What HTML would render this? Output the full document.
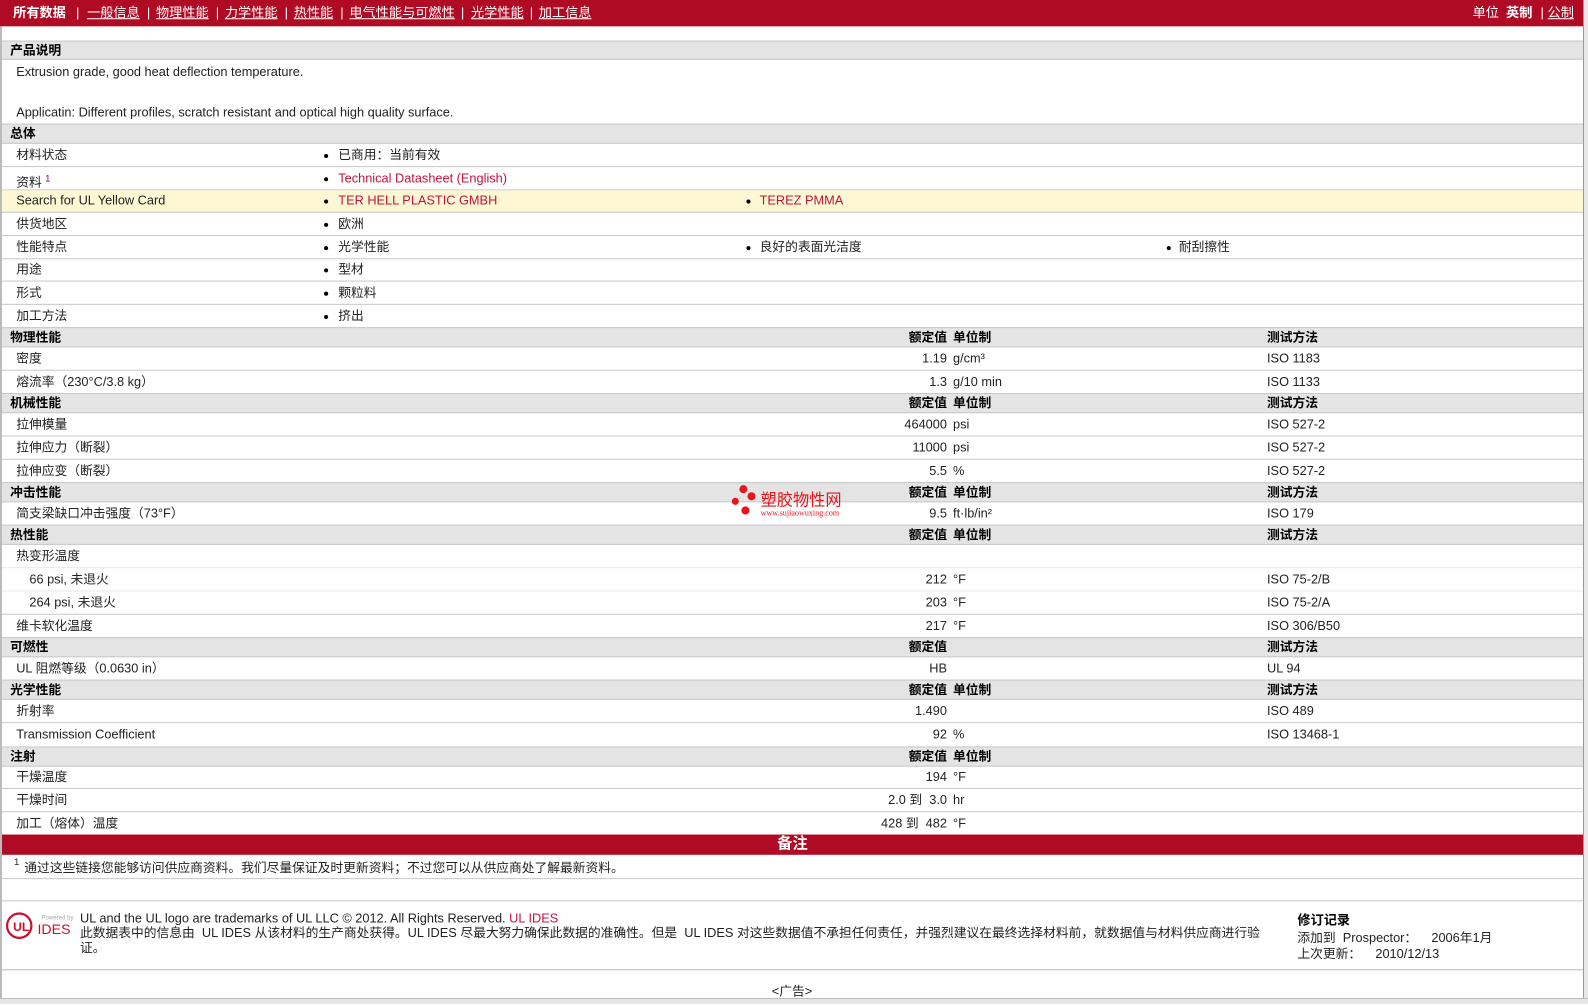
<!DOCTYPE html>
<html><head><meta charset="utf-8">
<style>
*{margin:0;padding:0;box-sizing:border-box}
body{width:1588px;height:1004px;position:relative;background:#fff;font-family:"Liberation Sans","Noto Sans CJK SC",sans-serif;font-size:12.6px;color:#222;overflow:hidden}
#w{position:absolute;left:0;top:0;width:1568px;height:992px;transform:scale(1.0128);transform-origin:0 0}
.a{position:absolute;white-space:nowrap}
.r{position:absolute;left:2px;width:1561px;border-bottom:1px solid #c8c8c8}
.g{background:#e4e4e4;font-weight:bold;color:#000;border-top:1px solid #c8c8c8;border-bottom:1px solid #c8c8c8}
.lk{color:#c0143c}
.bu{position:absolute;width:4px;height:4px;border-radius:50%;background:#000}
.v{position:absolute;right:628px;text-align:right}
.u{position:absolute;left:939px}
.t{position:absolute;left:1249px}
.l{position:absolute;left:14px}
.b1{left:318px}.b2{left:735px}.b3{left:1150px}
.x1{position:absolute;left:332px}.x2{position:absolute;left:748px}.x3{position:absolute;left:1162px}
</style></head><body>
<div id="w">
<div class="a" style="left:0;top:0;width:1565px;height:26px;background:#b00b24;color:#fff;font-size:13px;line-height:26px">
<span class="a" style="left:13px;font-weight:bold">所有数据</span>
<span class="a" style="left:75px">|</span>
<span class="a" style="left:86px;text-decoration:underline">一般信息</span>
<span class="a" style="left:145px">|</span>
<span class="a" style="left:154px;text-decoration:underline">物理性能</span>
<span class="a" style="left:213px">|</span>
<span class="a" style="left:222px;text-decoration:underline">力学性能</span>
<span class="a" style="left:281px">|</span>
<span class="a" style="left:290px;text-decoration:underline">热性能</span>
<span class="a" style="left:336px">|</span>
<span class="a" style="left:345px;text-decoration:underline">电气性能与可燃性</span>
<span class="a" style="left:455px">|</span>
<span class="a" style="left:465px;text-decoration:underline">光学性能</span>
<span class="a" style="left:523px">|</span>
<span class="a" style="left:532px;text-decoration:underline">加工信息</span>
<span class="a" style="left:1454px">单位</span>
<span class="a" style="left:1487px;font-weight:bold">英制</span>
<span class="a" style="left:1521px">|</span>
<span class="a" style="left:1528px;text-decoration:underline">公制</span>
</div>
<div class="a" style="left:0;top:26px;width:2px;height:960px;background:#bbb"></div>
<div class="a" style="left:1563px;top:26px;width:1px;height:960px;background:#bbb"></div>

<div class="r g" style="top:40px;height:19px;line-height:18px"><span class="a" style="left:8px">产品说明</span></div>
<div class="a" style="left:16px;top:64px;line-height:15px">Extrusion grade, good heat deflection temperature.</div>
<div class="a" style="left:16px;top:104px;line-height:15px">Applicatin: Different profiles, scratch resistant and optical high quality surface.</div>

<div class="r g" style="top:122px;height:20px;line-height:18px"><span class="a" style="left:8px">总体</span></div>
<div class="r" style="top:142px;height:23px;line-height:22px"><span class="l">材料状态</span><span class="bu b1" style="top:10px"></span><span class="x1">已商用：当前有效</span></div>
<div class="r" style="top:165px;height:23px;line-height:22px"><span class="l">资料 <sup style="font-size:9px;color:#606">1</sup></span><span class="bu b1" style="top:10px"></span><span class="x1 lk">Technical Datasheet (English)</span></div>
<div class="r" style="top:188px;height:22px;line-height:21px;background:#fdf8d3"><span class="l">Search for UL Yellow Card</span><span class="bu b1" style="top:9px"></span><span class="x1 lk">TER HELL PLASTIC GMBH</span><span class="bu b2" style="top:9px"></span><span class="x2 lk">TEREZ PMMA</span></div>
<div class="r" style="top:210px;height:23px;line-height:22px"><span class="l">供货地区</span><span class="bu b1" style="top:10px"></span><span class="x1">欧洲</span></div>
<div class="r" style="top:233px;height:23px;line-height:22px"><span class="l">性能特点</span><span class="bu b1" style="top:10px"></span><span class="x1">光学性能</span><span class="bu b2" style="top:10px"></span><span class="x2">良好的表面光洁度</span><span class="bu b3" style="top:10px"></span><span class="x3">耐刮擦性</span></div>
<div class="r" style="top:256px;height:22px;line-height:21px"><span class="l">用途</span><span class="bu b1" style="top:9px"></span><span class="x1">型材</span></div>
<div class="r" style="top:278px;height:23px;line-height:22px"><span class="l">形式</span><span class="bu b1" style="top:10px"></span><span class="x1">颗粒料</span></div>
<div class="r" style="top:301px;height:23px;line-height:22px;border-bottom:none"><span class="l">加工方法</span><span class="bu b1" style="top:10px"></span><span class="x1">挤出</span></div>

<div class="r g" style="top:323px;height:20px;line-height:18px"><span class="a" style="left:8px">物理性能</span><span class="v">额定值</span><span class="u">单位制</span><span class="t">测试方法</span></div>
<div class="r" style="top:343px;height:23px;line-height:22px"><span class="l">密度</span><span class="v">1.19</span><span class="u">g/cm³</span><span class="t">ISO 1183</span></div>
<div class="r" style="top:366px;height:22px;line-height:22px;border-bottom:none"><span class="l">熔流率（230°C/3.8 kg）</span><span class="v">1.3</span><span class="u">g/10 min</span><span class="t">ISO 1133</span></div>

<div class="r g" style="top:388px;height:20px;line-height:18px"><span class="a" style="left:8px">机械性能</span><span class="v">额定值</span><span class="u">单位制</span><span class="t">测试方法</span></div>
<div class="r" style="top:408px;height:23px;line-height:22px"><span class="l">拉伸模量</span><span class="v">464000</span><span class="u">psi</span><span class="t">ISO 527-2</span></div>
<div class="r" style="top:431px;height:23px;line-height:22px"><span class="l">拉伸应力（断裂）</span><span class="v">11000</span><span class="u">psi</span><span class="t">ISO 527-2</span></div>
<div class="r" style="top:454px;height:22px;line-height:22px;border-bottom:none"><span class="l">拉伸应变（断裂）</span><span class="v">5.5</span><span class="u">%</span><span class="t">ISO 527-2</span></div>

<div class="r g" style="top:476px;height:20px;line-height:18px"><span class="a" style="left:8px">冲击性能</span><span class="v">额定值</span><span class="u">单位制</span><span class="t">测试方法</span></div>
<div class="r" style="top:496px;height:22px;line-height:22px;border-bottom:none"><span class="l">简支梁缺口冲击强度（73°F）</span><span class="v">9.5</span><span class="u">ft·lb/in²</span><span class="t">ISO 179</span></div>

<div class="r g" style="top:518px;height:20px;line-height:18px"><span class="a" style="left:8px">热性能</span><span class="v">额定值</span><span class="u">单位制</span><span class="t">测试方法</span></div>
<div class="r" style="top:538px;height:23px;line-height:22px;border-bottom-color:#e8e8e8"><span class="l">热变形温度</span></div>
<div class="r" style="top:561px;height:23px;line-height:22px;border-bottom-color:#e8e8e8"><span class="a" style="left:27px">66 psi, 未退火</span><span class="v">212</span><span class="u">°F</span><span class="t">ISO 75-2/B</span></div>
<div class="r" style="top:584px;height:23px;line-height:22px"><span class="a" style="left:27px">264 psi, 未退火</span><span class="v">203</span><span class="u">°F</span><span class="t">ISO 75-2/A</span></div>
<div class="r" style="top:607px;height:22px;line-height:22px;border-bottom:none"><span class="l">维卡软化温度</span><span class="v">217</span><span class="u">°F</span><span class="t">ISO 306/B50</span></div>

<div class="r g" style="top:629px;height:20px;line-height:18px"><span class="a" style="left:8px">可燃性</span><span class="v">额定值</span><span class="t">测试方法</span></div>
<div class="r" style="top:649px;height:22px;line-height:22px;border-bottom:none"><span class="l">UL 阻燃等级（0.0630 in）</span><span class="v">HB</span><span class="t">UL 94</span></div>

<div class="r g" style="top:671px;height:20px;line-height:18px"><span class="a" style="left:8px">光学性能</span><span class="v">额定值</span><span class="u">单位制</span><span class="t">测试方法</span></div>
<div class="r" style="top:691px;height:23px;line-height:22px"><span class="l">折射率</span><span class="v">1.490</span><span class="t">ISO 489</span></div>
<div class="r" style="top:714px;height:23px;line-height:22px;border-bottom:none"><span class="l">Transmission Coefficient</span><span class="v">92</span><span class="u">%</span><span class="t">ISO 13468-1</span></div>

<div class="r g" style="top:737px;height:20px;line-height:18px"><span class="a" style="left:8px">注射</span><span class="v">额定值</span><span class="u">单位制</span></div>
<div class="r" style="top:757px;height:22px;line-height:21px"><span class="l">干燥温度</span><span class="v">194</span><span class="u">°F</span></div>
<div class="r" style="top:779px;height:23px;line-height:22px"><span class="l">干燥时间</span><span class="v">2.0 到&nbsp; 3.0</span><span class="u">hr</span></div>
<div class="r" style="top:802px;height:22px;line-height:22px;border-bottom:none"><span class="l">加工（熔体）温度</span><span class="v">428 到&nbsp; 482</span><span class="u">°F</span></div>

<div class="a" style="left:2px;top:824px;width:1561px;height:20px;background:#b00b24;color:#fff;font-weight:bold;font-size:15px;line-height:19px;text-align:center">备注</div>
<div class="r" style="top:844px;height:24px;line-height:26px"><span class="a" style="left:12px;top:-6px;font-size:9px">1</span><span class="a" style="left:22px">通过这些链接您能够访问供应商资料。我们尽量保证及时更新资料；不过您可以从供应商处了解最新资料。</span></div>
<div class="r" style="top:868px;height:22px"></div>

<svg class="a" style="left:5px;top:899px" width="70" height="32" viewBox="0 0 70 32">
<circle cx="14" cy="15" r="12" fill="none" stroke="#c8102e" stroke-width="2.2"/>
<text x="8" y="20" font-family="Liberation Sans" font-size="12" font-weight="bold" fill="#c8102e">UL</text>
<text x="36" y="9" font-family="Liberation Sans" font-size="6" fill="#aaa">Powered by</text>
<text x="32" y="23" font-family="Liberation Sans" font-size="14" fill="#c8102e">IDES</text>
</svg>
<div class="a" style="left:79px;top:900px;line-height:15px">UL and the UL logo are trademarks of UL LLC © 2012. All Rights Reserved. <span class="lk">UL IDES</span></div>
<div class="a" style="left:79px;top:914px;line-height:15px;white-space:normal;width:1185px">此数据表中的信息由&nbsp; UL IDES 从该材料的生产商处获得。UL IDES 尽最大努力确保此数据的准确性。但是&nbsp; UL IDES 对这些数据值不承担任何责任，并强烈建议在最终选择材料前，就数据值与材料供应商进行验证。</div>
<div class="a" style="left:1281px;top:898px;font-weight:bold;font-size:13px;color:#000">修订记录</div>
<div class="a" style="left:1281px;top:915px">添加到&nbsp; Prospector：&nbsp;&nbsp;&nbsp; 2006年1月</div>
<div class="a" style="left:1281px;top:931px">上次更新：&nbsp;&nbsp;&nbsp; 2010/12/13</div>
<div class="a" style="left:2px;top:957px;width:1561px;height:1px;background:#bbb"></div>
<div class="a" style="left:762px;top:968px">&lt;广告&gt;</div>

<svg class="a" style="left:720px;top:478px" width="130" height="34" viewBox="0 0 130 34">
<circle cx="14" cy="5" r="4" fill="#e8141c"/><circle cx="22" cy="12" r="4" fill="#e8141c"/>
<circle cx="6" cy="17" r="3.5" fill="#e8141c"/><circle cx="16" cy="26" r="4" fill="#e8141c"/>
<text x="31" y="21" font-family="Noto Sans CJK SC" font-size="16" fill="#e8141c">塑胶物性网</text>
<text x="31" y="31" font-family="Liberation Serif" font-size="8" fill="#e8141c">www.sujiaowuxing.com</text>
</svg>
</div>
<div class="a" style="left:1583px;top:0;width:5px;height:1004px;background:#e8e8e8;border-left:1px solid #999"></div>
<div class="a" style="left:0;top:998px;width:1588px;height:6px;background:#e6e6e6;border-top:1px solid #bbb"></div>
</body></html>
